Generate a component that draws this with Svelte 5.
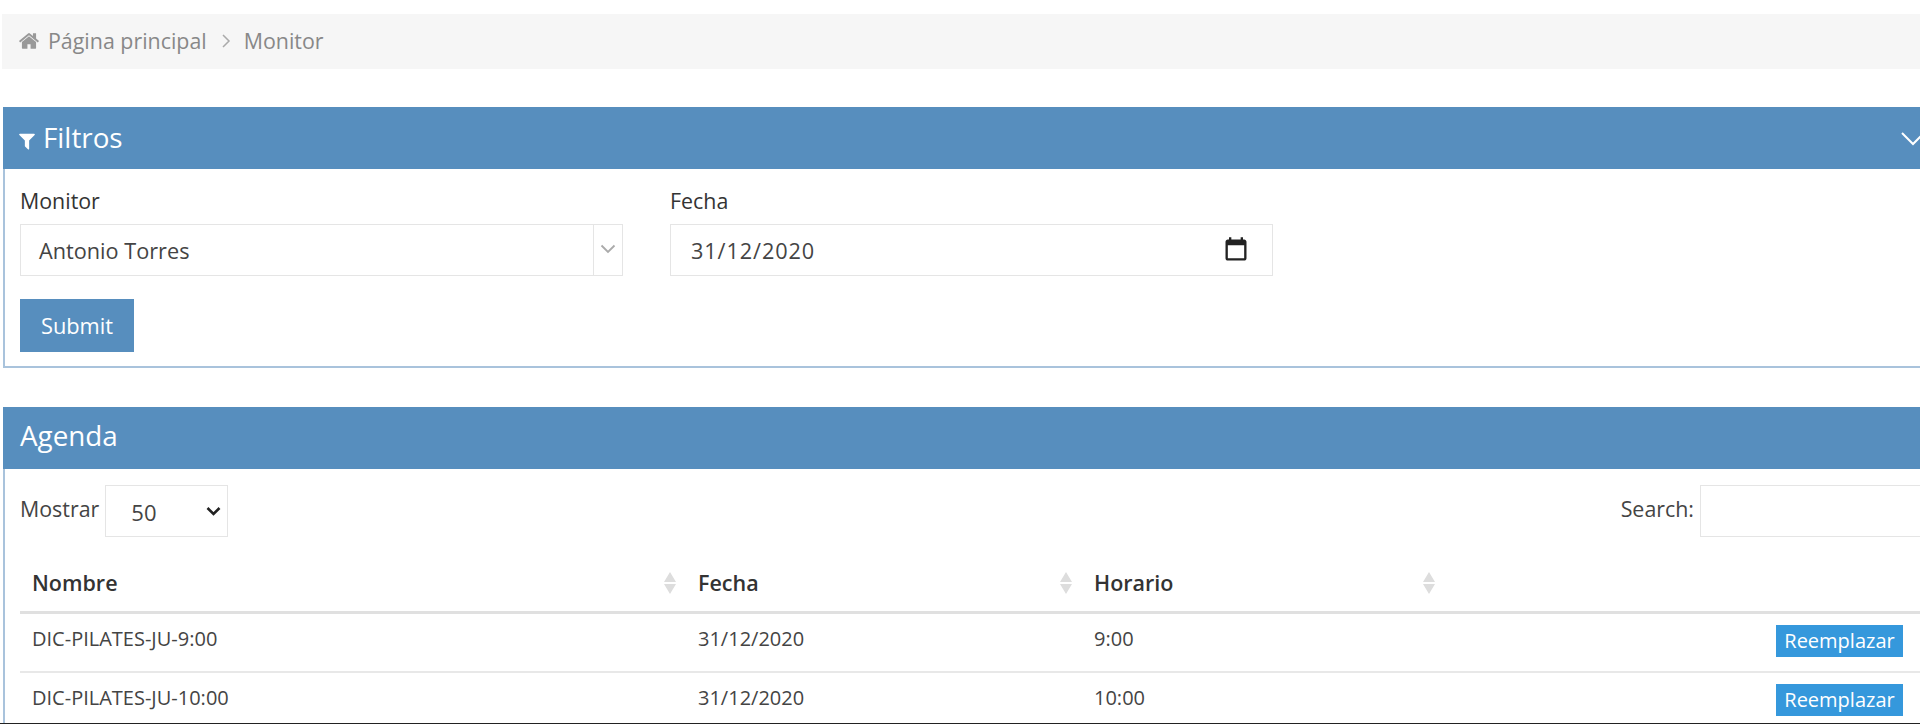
<script>
  const rows = [
    { nombre: 'DIC-PILATES-JU-9:00', fecha: '31/12/2020', horario: '9:00' },
    { nombre: 'DIC-PILATES-JU-10:00', fecha: '31/12/2020', horario: '10:00' }
  ];
  const columns = ['Nombre', 'Fecha', 'Horario'];
</script>

<div class="page">
  <nav class="crumbs">
    <svg class="home" viewBox="0 0 1792 1792" aria-hidden="true"><path d="M1472 992v480q0 26-19 45t-45 19h-384v-384h-256v384h-384q-26 0-45-19t-19-45v-480q0-1 .5-3t.5-3l575-474 575 474q1 2 1 6zm223-69l-62 74q-8 9-21 11h-3q-13 0-21-7l-692-577-692 577q-12 8-24 7-13-2-21-11l-62-74q-8-10-7-23.5t11-21.5l719-599q32-26 76-26t76 26l244 204v-195q0-14 9-23t23-9h192q14 0 23 9t9 23v408l219 182q10 8 11 21.5t-7 23.5z"/></svg>
    <span>Página principal</span>
    <svg class="sep" viewBox="0 0 10 16" aria-hidden="true"><path d="M2 2l6 6-6 6"/></svg>
    <span>Monitor</span>
  </nav>

  <section class="panel filtros">
    <header class="head">
      <svg class="funnel" viewBox="0 0 1792 1792" aria-hidden="true"><path d="M1595 295q17 41-14 70l-493 493v742q0 42-39 59-13 5-25 5-27 0-45-19l-256-256q-19-19-19-45v-486l-493-493q-31-29-14-70 17-39 59-39h1280q42 0 59 39z"/></svg>
      <h2>Filtros</h2>
      <svg class="collapse" viewBox="0 0 26 16" aria-hidden="true"><path d="M2 2l11 11L24 2"/></svg>
    </header>
    <div class="body form">
      <div class="fields">
        <div class="field">
          <span class="label">Monitor</span>
          <div class="control">
            <span class="value">Antonio Torres</span>
            <span class="addon">
              <svg viewBox="0 0 16 10" aria-hidden="true"><path d="M1.500 1.500L8 8l6.500-6.500"/></svg>
            </span>
          </div>
        </div>
        <div class="field">
          <span class="label">Fecha</span>
          <div class="control">
            <span class="value date">31/12/2020</span>
            <svg class="calendar" viewBox="0 0 24 24" aria-hidden="true"><path d="M19 3h-1V1h-2v2H8V1H6v2H5c-1.110 0-1.990.9-1.990 2L3 19c0 1.100.89 2 2 2h14c1.100 0 2-.9 2-2V5c0-1.100-.9-2-2-2zm0 16H5V8h14v11z"/></svg>
          </div>
        </div>
      </div>
      <button class="submit" type="button">Submit</button>
    </div>
  </section>

  <section class="panel agenda">
    <header class="head">
      <h2>Agenda</h2>
    </header>
    <div class="body">
      <div class="tools">
        <label class="length">
          <span>Mostrar</span>
          <span class="select-wrap">
            <select>
              <option>50</option>
            </select>
            <svg class="select-arrow" viewBox="0 0 15 9" aria-hidden="true"><path d="M1.500 1l6 6 6-6"/></svg>
          </span>
        </label>
        <label class="search">
          <span>Search:</span>
          <input type="text" />
        </label>
      </div>
      <table>
        <thead>
          <tr>
            {#each columns as col}
              <th>
                <div class="th">
                  <span>{col}</span>
                  <svg class="sort" viewBox="0 0 12 22" aria-hidden="true"><path d="M6 0l6 10H0zM6 22L0 12h12z"/></svg>
                </div>
              </th>
            {/each}
            <th></th>
          </tr>
        </thead>
        <tbody>
          {#each rows as row}
            <tr>
              <td>{row.nombre}</td>
              <td>{row.fecha}</td>
              <td>{row.horario}</td>
              <td class="action"><button type="button">Reemplazar</button></td>
            </tr>
          {/each}
        </tbody>
      </table>
    </div>
  </section>
</div>

<style>
  :global(body) {
    margin: 0;
    background: #fff;
    overflow: hidden;
  }
  .page {
    box-sizing: border-box;
    width: 1920px;
    height: 724px;
    overflow: hidden;
    padding: 14px 0 0 2px;
    border-bottom: 1px solid #222;
    font-family: "Open Sans", "Noto Sans", sans-serif;
    color: #333;
  }
  .crumbs {
    box-sizing: border-box;
    display: flex;
    align-items: center;
    height: 55px;
    padding: 0 0 2px 16px;
    background: #f6f6f6;
    color: #888;
    font-size: 21.400px;
  }
  .home {
    width: 22px;
    height: 22px;
    margin-right: 8px;
    fill: #999;
  }
  .sep {
    width: 10px;
    height: 16px;
    margin: 0 13px 0 14px;
    fill: none;
    stroke: #aaa;
    stroke-width: 1.500;
  }
  .panel {
    box-sizing: border-box;
    width: 1960px;
    margin-left: 1px;
    border: 2px solid #a9c3dc;
    border-top: 0;
  }
  .filtros {
    margin-top: 38px;
    height: 261px;
  }
  .agenda {
    margin-top: 39px;
    height: 400px;
  }
  .head {
    display: flex;
    align-items: center;
    height: 62px;
    margin: 0 -2px;
    padding-left: 19px;
    background: #578ebe;
    color: #fff;
    position: relative;
  }
  .head h2 {
    margin: 0;
    font-size: 27.800px;
    font-weight: 400;
  }
  .filtros h2 {
    margin-bottom: 2px;
  }
  .agenda h2 {
    margin-bottom: 6px;
    margin-left: -2px;
  }
  .funnel {
    width: 20px;
    height: 20px;
    margin: 6px 6px 0 -5px;
    fill: #fff;
  }
  .collapse {
    position: absolute;
    left: 1897px;
    top: 24px;
    width: 26px;
    height: 16px;
    fill: none;
    stroke: #fff;
    stroke-width: 2;
  }
  .body {
    padding: 0 0 0 15px;
  }
  .fields {
    display: flex;
    gap: 47px;
    padding-top: 16px;
  }
  .field {
    width: 603px;
  }
  .label {
    display: block;
    height: 39px;
    font-size: 21.400px;
    line-height: 31px;
  }
  .control {
    box-sizing: border-box;
    display: flex;
    align-items: center;
    height: 52px;
    border: 1px solid #e5e5e5;
    font-size: 21.700px;
    color: #444;
  }
  .value {
    flex: 1;
    padding-left: 18px;
  }
  .date {
    padding-left: 20px;
    letter-spacing: .9px;
  }
  .addon {
    display: flex;
    align-items: center;
    justify-content: center;
    align-self: stretch;
    width: 28px;
    border-left: 1px solid #e5e5e5;
  }
  .addon svg {
    width: 16px;
    height: 10px;
    margin-top: -3px;
    fill: none;
    stroke: #aaa;
    stroke-width: 1.800;
  }
  .calendar {
    width: 28px;
    height: 28px;
    margin-right: 22px;
    fill: #222;
  }
  .submit {
    display: block;
    width: 114px;
    height: 53px;
    margin-top: 23px;
    border: 0;
    background: #578ebe;
    color: #fff;
    font: 400 21.800px "Open Sans", "Noto Sans", sans-serif;
  }
  .tools {
    display: flex;
    justify-content: space-between;
    padding-top: 16px;
    height: 52px;
  }
  .length, .search {
    display: flex;
    align-items: flex-start;
    font-size: 21.400px;
    color: #444;
    line-height: 48px;
  }
  .select-wrap {
    position: relative;
    display: block;
    height: 52px;
    margin-left: 6px;
  }
  .select-wrap select {
    box-sizing: border-box;
    display: block;
    appearance: none;
    width: 123px;
    height: 52px;
    padding: 2px 0 0 25px;
    border: 1px solid #e5e5e5;
    border-radius: 0;
    background: #fff;
    color: #444;
    font: 400 22px "Open Sans", "Noto Sans", sans-serif;
  }
  .select-arrow {
    position: absolute;
    right: 7px;
    top: 22px;
    width: 15px;
    height: 9px;
    fill: none;
    stroke: #222;
    stroke-width: 2.600;
    pointer-events: none;
  }
  .search {
    margin-right: 26px;
  }
  .search input {
    box-sizing: border-box;
    width: 235px;
    height: 52px;
    margin-left: 6px;
    border: 1px solid #e5e5e5;
    background: #fff;
  }
  table {
    table-layout: fixed;
    width: 1920px;
    margin-top: 12px;
    border-collapse: collapse;
    font-size: 20px;
  }
  th {
    height: 57px;
    padding: 5px 0 0 12px;
    border-bottom: 3px solid #e0e0e0;
    text-align: left;
    font-size: 21.500px;
    font-weight: 600;
    color: #333;
  }
  th:nth-child(1) { width: 654px; }
  th:nth-child(2) { width: 384px; }
  th:nth-child(3) { width: 351px; }
  .th {
    display: flex;
    align-items: center;
    justify-content: space-between;
    padding-right: 10px;
  }
  .sort {
    width: 12px;
    height: 22px;
    fill: #ddd;
  }
  td {
    height: 48px;
    padding: 0 0 9px 12px;
    border-bottom: 2px solid #e8e8e8;
    color: #444;
  }
  .action {
    padding: 0 37px 4px 0;
    text-align: right;
  }
  .action button {
    width: 127px;
    height: 32px;
    padding: 0;
    border: 0;
    background: #3598dc;
    color: #fff;
    font: 400 20px "Open Sans", "Noto Sans", sans-serif;
  }
</style>
